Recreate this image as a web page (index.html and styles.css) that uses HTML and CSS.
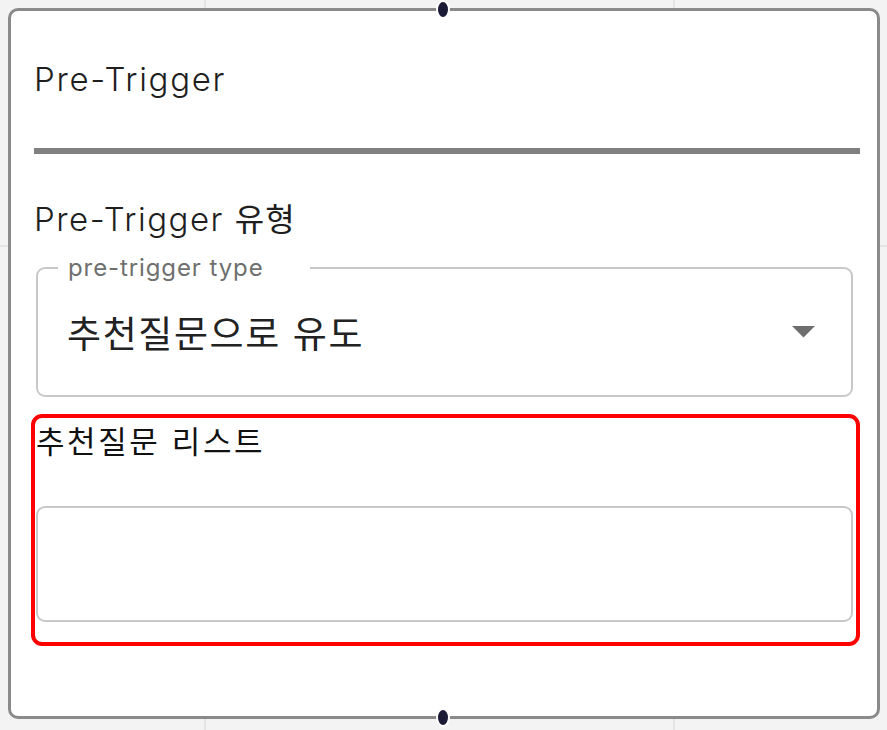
FILE: index.html
```html
<!DOCTYPE html>
<html lang="ko">
<head>
<meta charset="utf-8">
<link rel="stylesheet" href="styles.css">
</head>
<body>
<div class="card">
  <span class="handle handle-top"></span>
  <div class="title">Pre-Trigger</div>
  <div class="divider"></div>
  <div class="section-label">Pre-Trigger <span class="ko">유형</span></div>
  <div class="select">
    <fieldset class="select-outline">
      <legend class="select-legend">pre-trigger type</legend>
    </fieldset>
    <div class="select-value">추천질문으로 유도</div>
    <svg class="select-arrow" width="23" height="12" viewBox="0 0 23 12"><path d="M0 0 L23 0 L11.5 11.5 Z" fill="#6e6e6e"/></svg>
  </div>
  <div class="highlight">
    <div class="list-label">추천질문 리스트</div>
    <div class="list-input"></div>
  </div>
  <span class="handle handle-bottom"></span>
</div>
</body>
</html>
```

FILE: styles.css
```css
html, body {
  margin: 0;
  padding: 0;
}
body {
  width: 887px;
  height: 730px;
  padding: 8px 0 0 8px;
  box-sizing: border-box;
  background-color: #f3f3f3;
  background-image:
    linear-gradient(to right, transparent 204px, #e4e4e4 204px, #e4e4e4 206px, transparent 206px),
    linear-gradient(to right, transparent 673px, #e4e4e4 673px, #e4e4e4 675px, transparent 675px),
    linear-gradient(to bottom, transparent 245px, #e4e4e4 245px, #e4e4e4 247px, transparent 247px);
  font-family: "Inter", "Noto Sans CJK KR", sans-serif;
  overflow: hidden;
}
.card {
  position: relative;
  width: 872px;
  height: 711px;
  box-sizing: border-box;
  border: 3px solid #8a8a8a;
  border-radius: 10px;
  background: #ffffff;
  padding: 48px 17px 0 20px;
  display: flex;
  flex-direction: column;
}
.handle {
  position: absolute;
  left: 425px;
  width: 10px;
  height: 15px;
  border-radius: 50%;
  background: #1b1b38;
  border: 2px solid #ffffff;
}
.handle-top { top: -11px; }
.handle-bottom { bottom: -11px; }
.title {
  margin-left: 3px;
  font-size: 33px;
  font-weight: 300;
  letter-spacing: 1.7px;
  line-height: 40px;
  color: #1e1e1e;
}
.divider {
  margin: 49px 0 0 3px;
  height: 6px;
  background: #808080;
}
.section-label {
  margin: 43px 0 0 3px;
  font-size: 33px;
  font-weight: 300;
  letter-spacing: 1.5px;
  line-height: 40px;
  color: #1e1e1e;
}
.ko {
  font-family: "Noto Sans CJK KR", sans-serif;
  font-size: 32px;
  letter-spacing: 1px;
  font-weight: 400;
}
.select {
  position: relative;
  margin: 17px 7px 0 5px;
  height: 141px;
  display: flex;
  align-items: center;
  padding: 10px 38px 0 31px;
  box-sizing: border-box;
}
.select-outline {
  position: absolute;
  left: 0;
  right: 0;
  top: 0;
  bottom: 0;
  margin: 0;
  padding: 0 0 0 20px;
  border: 2.5px solid #c8c8c8;
  border-radius: 9px;
  font-size: 24px;
}
.select-legend {
  padding: 0 46px 0 10px;
  color: #6f6f6f;
  font-size: 24px;
  letter-spacing: 0.9px;
  line-height: 24px;
}
.select-value {
  flex: 1;
  font-size: 37px;
  letter-spacing: 1.6px;
  color: #222222;
  font-family: "Noto Sans CJK KR", sans-serif;
}
.select-arrow {
  display: block;
}
.highlight {
  margin-top: 17px;
  height: 232px;
  box-sizing: border-box;
  border: 4px solid #ff0000;
  border-radius: 11px;
  padding: 0 3px 20px 1px;
  display: flex;
  flex-direction: column;
}
.list-label {
  font-family: "Noto Sans CJK KR", sans-serif;
  font-size: 31px;
  letter-spacing: 2.6px;
  line-height: 44px;
  color: #111111;
}
.list-input {
  margin-top: auto;
  height: 116px;
  box-sizing: border-box;
  border: 2.5px solid #c8c8c8;
  border-radius: 9px;
}
```
